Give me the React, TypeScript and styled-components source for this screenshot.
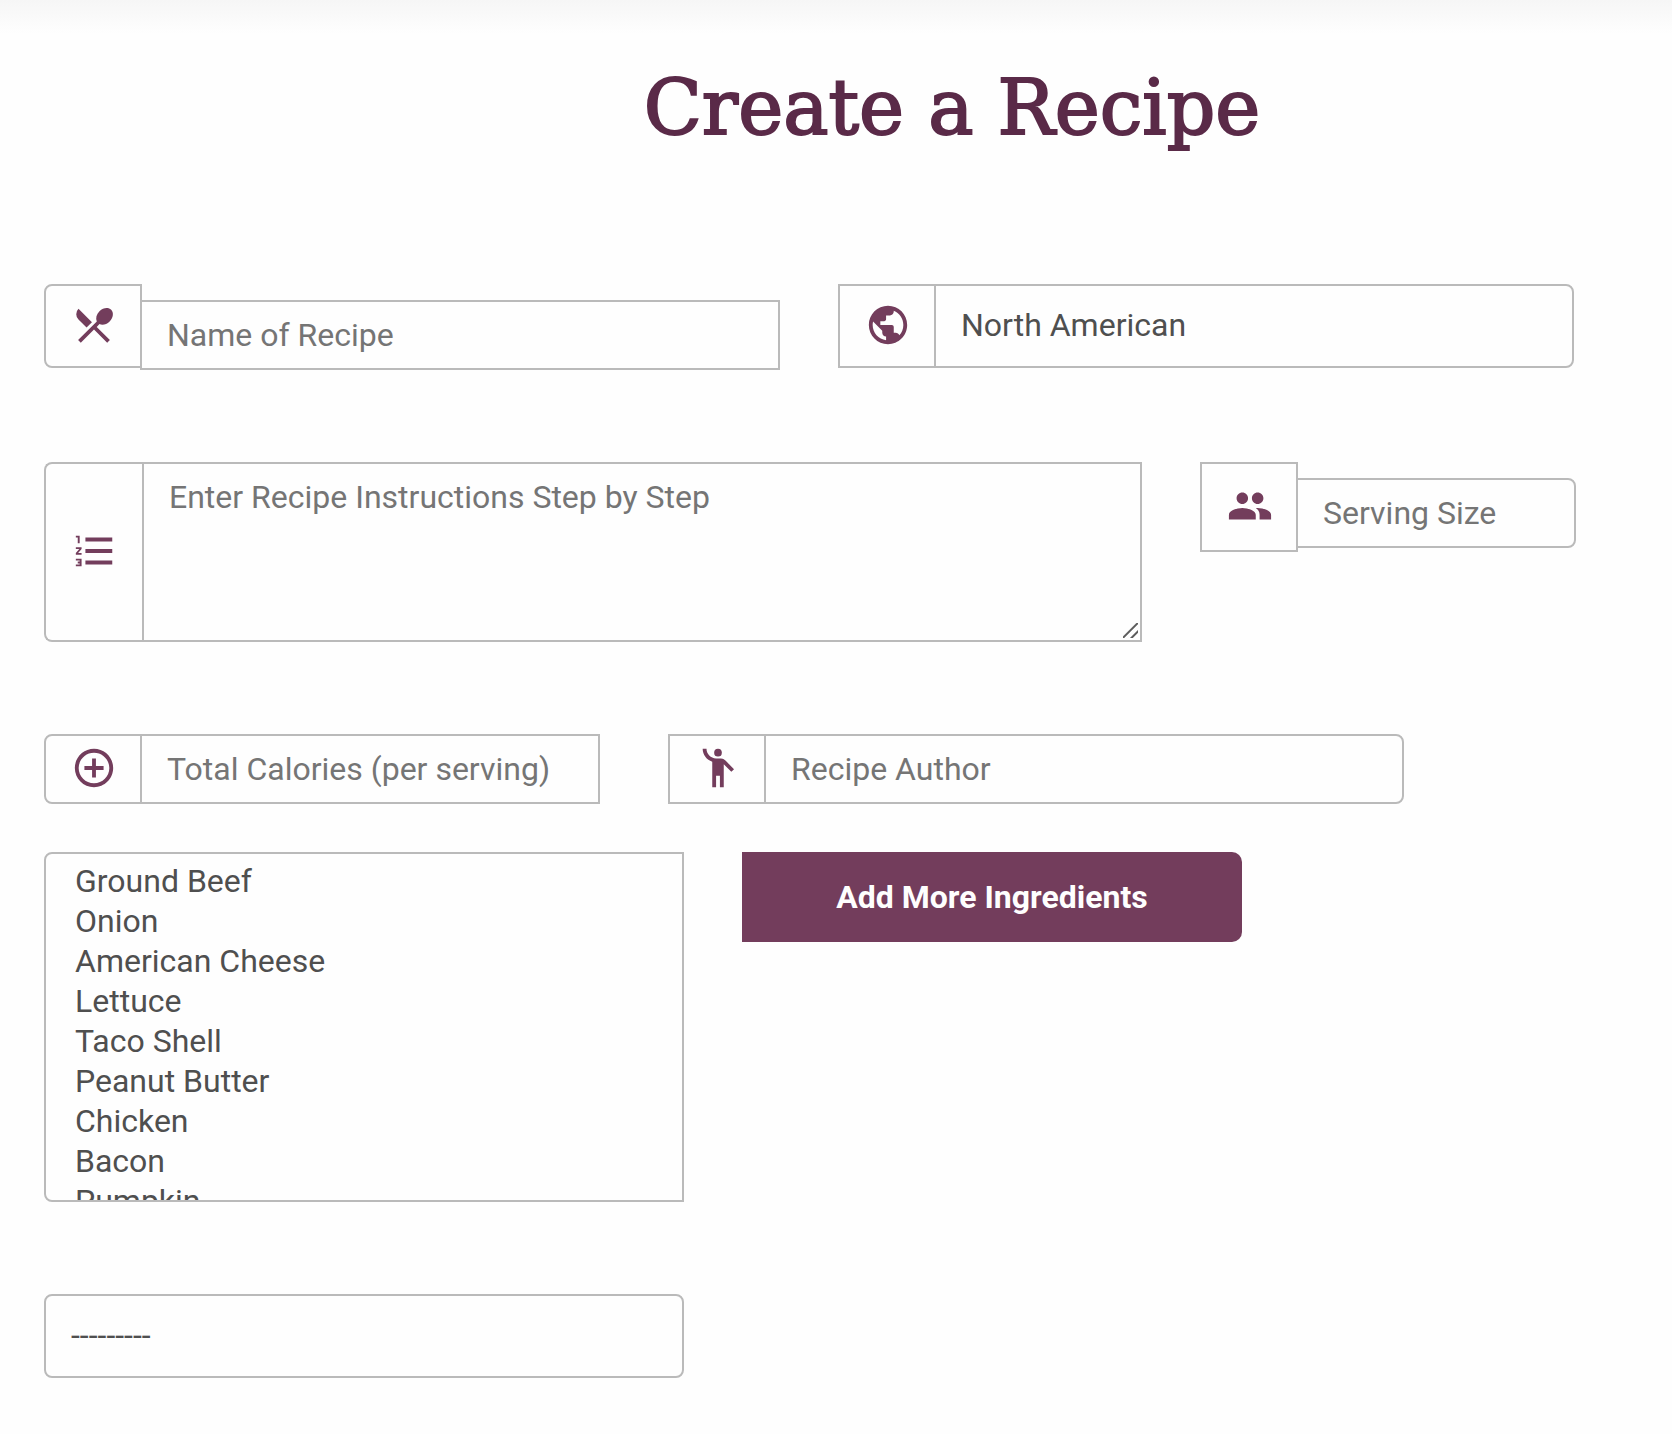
import React from 'react';
import styled, { createGlobalStyle, css } from 'styled-components';
import {
  MdAddCircleOutline,
  MdEmojiPeople,
  MdFormatListNumbered,
  MdPeople,
  MdPublic,
  MdRestaurantMenu,
} from 'react-icons/md';

const line = '#bababa';
const plum = '#733d5c';

const GlobalStyle = createGlobalStyle`
  *, *::before, *::after { box-sizing: border-box; }
  body {
    margin: 0;
    background: #fefefe;
    color: #4f4f4f;
    font-family: Roboto, "Liberation Sans", sans-serif;
    font-size: 32px;
    line-height: 40px;
  }
`;

const Page = styled.main`
  background: linear-gradient(#f6f6f6, #fefefe 34px) no-repeat;
`;

const Title = styled.h1`
  margin: 0;
  padding: 56px 0 0 232px;
  color: #5a2a48;
  font-family: "DejaVu Serif", serif;
  font-size: 76px;
  font-weight: 400;
  line-height: 104px;
  text-align: center;
  -webkit-text-stroke: 2px #5a2a48;
`;

const Form = styled.form`
  display: flex;
  flex-direction: column;
  gap: 92px;
  padding: 124px 96px 56px 44px;
`;

const Section = styled.div`
  display: flex;
  flex-direction: column;
  gap: 48px;
`;

const Row = styled.div<{ $gap?: number }>`
  display: flex;
  align-items: flex-start;
  gap: ${({ $gap = 58 }) => $gap}px;
`;

const Group = styled.div<{ $basis: number }>`
  display: flex;
  flex: 0 1 ${({ $basis }) => $basis}px;
  align-items: flex-start;
  min-width: 0;
`;

type Edge = 'left' | 'right' | 'both' | 'none';

const radii: Record<Edge, string> = {
  left: '8px 0 0 8px',
  right: '0 8px 8px 0',
  both: '8px',
  none: '0',
};

const outlined = css<{ $round?: Edge }>`
  border: 2px solid ${line};
  border-radius: ${({ $round = 'none' }) => radii[$round]};
  background: transparent;
`;

const IconLabel = styled.label<{ $round?: Edge; $height: number }>`
  ${outlined}
  display: flex;
  flex: none;
  align-items: center;
  justify-content: center;
  width: 98px;
  height: ${({ $height }) => $height}px;
  padding: 0 0 2px 2px;
  color: ${plum};
  font-size: 46px;
`;

const control = css`
  ${outlined}
  flex: 1 1 0;
  min-width: 0;
  margin: 0 0 0 -2px;
  padding: 0 25px;
  color: inherit;
  font: inherit;
  appearance: none;
  outline: none;
  &::placeholder { color: #757575; opacity: 1; }
`;

const TextInput = styled.input<{ $round?: Edge; $dropped?: boolean }>`
  ${control}
  height: 70px;
  margin-top: ${({ $dropped }) => ($dropped ? 16 : 0)}px;
`;

/* The two-line resize grip is painted in the bottom right corner. */
const Steps = styled.textarea`
  ${control}
  height: 180px;
  margin-left: 0;
  padding: 13px 25px;
  resize: both;
  background: linear-gradient(
      135deg,
      transparent 9px,
      #5c5c5c 10px,
      #5c5c5c 11px,
      transparent 12px,
      transparent 15px,
      #5c5c5c 16px,
      #5c5c5c 17px,
      transparent 18px
    )
    right 2px bottom 2px / 15px 15px no-repeat;
  &::-webkit-resizer { background: transparent; }
`;

const StepsLabel = styled(IconLabel)`
  border-right: 0;
`;

const Dropdown = styled.select<{ $round?: Edge }>`
  ${control}
  height: 84px;
  padding-bottom: 2px;
`;

const SingleDropdown = styled(Dropdown)`
  flex: 0 1 640px;
  margin-left: 0;
`;

const IngredientList = styled.select<{ $round?: Edge }>`
  ${outlined}
  flex: 0 1 640px;
  min-width: 0;
  height: 350px;
  margin: 0;
  padding: 8px 25px 0;
  color: inherit;
  font: inherit;
  appearance: none;
  outline: none;
  overflow-y: auto;
  scrollbar-width: none;
  option {
    min-height: 40px;
    padding: 0 4px;
    line-height: 40px;
  }
`;

const AddButton = styled.button`
  flex: 0 1 500px;
  height: 90px;
  padding: 0 24px;
  border: 0;
  border-radius: 0 10px 10px 0;
  background: ${plum};
  color: #fefefe;
  font: inherit;
  font-weight: 700;
`;

const ingredients = [
  'Ground Beef',
  'Onion',
  'American Cheese',
  'Lettuce',
  'Taco Shell',
  'Peanut Butter',
  'Chicken',
  'Bacon',
  'Pumpkin',
];

export default function App() {
  return (
    <>
      <GlobalStyle />
      <Page>
        <Title>Create a Recipe</Title>
        <Form onSubmit={(e) => e.preventDefault()}>
          <Row>
            <Group $basis={736}>
              <IconLabel htmlFor="name" $round="left" $height={84}><MdRestaurantMenu /></IconLabel>
              <TextInput id="name" aria-label="Name of Recipe" placeholder="Name of Recipe" $dropped />
            </Group>
            <Group $basis={736}>
              <IconLabel htmlFor="cuisine" $height={84}><MdPublic /></IconLabel>
              <Dropdown id="cuisine" aria-label="Cuisine" $round="right">
                <option>North American</option>
              </Dropdown>
            </Group>
          </Row>
          <Row>
            <Group $basis={1098}>
              <StepsLabel htmlFor="steps" $round="left" $height={180}><MdFormatListNumbered /></StepsLabel>
              <Steps id="steps" aria-label="Recipe Instructions" placeholder="Enter Recipe Instructions Step by Step" />
            </Group>
            <Group $basis={376}>
              <IconLabel htmlFor="servings" $height={90}><MdPeople /></IconLabel>
              <TextInput id="servings" aria-label="Serving Size" placeholder="Serving Size" $round="right" $dropped />
            </Group>
          </Row>
          <Section>
            <Row $gap={68}>
              <Group $basis={556}>
                <IconLabel htmlFor="calories" $round="left" $height={70}><MdAddCircleOutline /></IconLabel>
                <TextInput id="calories" aria-label="Total Calories (per serving)" placeholder="Total Calories (per serving)" />
              </Group>
              <Group $basis={736}>
                <IconLabel htmlFor="author" $height={70}><MdEmojiPeople /></IconLabel>
                <TextInput id="author" aria-label="Recipe Author" placeholder="Recipe Author" $round="right" />
              </Group>
            </Row>
            <Row>
              <IngredientList multiple aria-label="Ingredients" $round="left">
                {ingredients.map((name) => (
                  <option key={name}>{name}</option>
                ))}
              </IngredientList>
              <AddButton type="button">Add More Ingredients</AddButton>
            </Row>
          </Section>
          <Row>
            <SingleDropdown aria-label="Category" $round="both">
              <option>---------</option>
            </SingleDropdown>
          </Row>
        </Form>
      </Page>
    </>
  );
}
